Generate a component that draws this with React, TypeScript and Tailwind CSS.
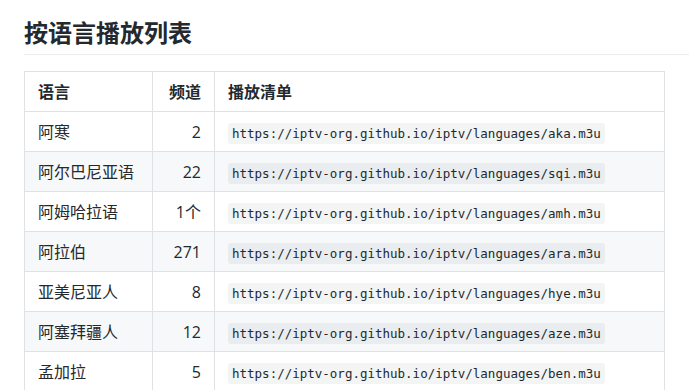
import React from "react";

const rows: [string, string][] = [
  ["阿寒", "2"],
  ["阿尔巴尼亚语", "22"],
  ["阿姆哈拉语", "1个"],
  ["阿拉伯", "271"],
  ["亚美尼亚人", "8"],
  ["阿塞拜疆人", "12"],
  ["孟加拉", "5"],
];
const codes = ["aka", "sqi", "amh", "ara", "hye", "aze", "ben"];

export default function App() {
  return (
    <div
      className="bg-white pl-6 pt-[18px] text-[#24292e] h-[390px] overflow-hidden"
      style={{ fontFamily: '"Open Sans", "Noto Sans CJK SC", sans-serif' }}
    >
      <h2 className="text-[24px] leading-[30px] font-bold pb-[6px] border-b border-[#eaecef]">
        按语言播放列表
      </h2>
      <table className="mt-4 border-collapse text-[16px] w-[641px] table-fixed">
        <colgroup>
          <col className="w-[128px]" />
          <col className="w-[62px]" />
          <col />
        </colgroup>
        <thead>
          <tr className="h-[40px] bg-white">
            <th className="border border-[#dfe2e5] px-[13px] text-left font-bold">语言</th>
            <th className="border border-[#dfe2e5] px-[13px] text-right font-bold">频道</th>
            <th className="border border-[#dfe2e5] px-[13px] text-left font-bold">播放清单</th>
          </tr>
        </thead>
        <tbody>
          {rows.map((r, i) => (
            <tr key={i} className={`h-[40px] ${i % 2 === 1 ? "bg-[#f6f8fa]" : "bg-white"}`}>
              <td className="border border-[#dfe2e5] px-[13px] text-left">{r[0]}</td>
              <td className="border border-[#dfe2e5] px-[13px] text-right">{r[1]}</td>
              <td className="border border-[#dfe2e5] px-[13px] text-left">
                <code
                  className="inline-block bg-[#1b1f230d] rounded-[3px] px-[4px] text-[12.5px] leading-[21px]"
                  style={{ fontFamily: '"DejaVu Sans Mono", monospace' }}
                >
                  https://iptv-org.github.io/iptv/languages/{codes[i]}.m3u
                </code>
              </td>
            </tr>
          ))}
        </tbody>
      </table>
    </div>
  );
}
